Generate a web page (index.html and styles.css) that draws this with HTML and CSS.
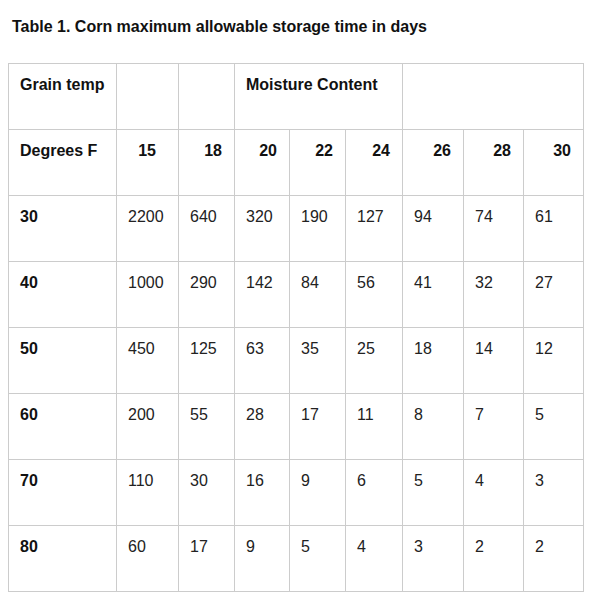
FILE: index.html
```html
<!DOCTYPE html>
<html>
<head>
<meta charset="utf-8">
<link rel="stylesheet" href="styles.css">
</head>
<body>
<h1 class="title">Table 1. Corn maximum allowable storage time in days</h1>
<table class="storage">
  <colgroup>
    <col class="c-temp">
    <col class="c-62">
    <col class="c-56">
    <col class="c-55">
    <col class="c-56">
    <col class="c-57">
    <col class="c-61">
    <col class="c-60">
    <col class="c-60">
  </colgroup>
  <tr class="head">
    <td>Grain temp</td>
    <td></td>
    <td></td>
    <td colspan="3">Moisture Content</td>
    <td colspan="3"></td>
  </tr>
  <tr class="head">
    <td>Degrees F</td>
    <td class="num num-wide">15</td>
    <td class="num">18</td>
    <td class="num">20</td>
    <td class="num">22</td>
    <td class="num">24</td>
    <td class="num">26</td>
    <td class="num">28</td>
    <td class="num">30</td>
  </tr>
  <tr><th>30</th><td>2200</td><td>640</td><td>320</td><td>190</td><td>127</td><td>94</td><td>74</td><td>61</td></tr>
  <tr><th>40</th><td>1000</td><td>290</td><td>142</td><td>84</td><td>56</td><td>41</td><td>32</td><td>27</td></tr>
  <tr><th>50</th><td>450</td><td>125</td><td>63</td><td>35</td><td>25</td><td>18</td><td>14</td><td>12</td></tr>
  <tr><th>60</th><td>200</td><td>55</td><td>28</td><td>17</td><td>11</td><td>8</td><td>7</td><td>5</td></tr>
  <tr><th>70</th><td>110</td><td>30</td><td>16</td><td>9</td><td>6</td><td>5</td><td>4</td><td>3</td></tr>
  <tr><th>80</th><td>60</td><td>17</td><td>9</td><td>5</td><td>4</td><td>3</td><td>2</td><td>2</td></tr>
</table>
</body>
</html>
```
FILE: styles.css
```css
html, body {
  background: #ffffff;
}
body {
  margin: 8px;
  font-family: "Liberation Sans", Arial, sans-serif;
  color: #222222;
}
.title {
  font-size: 16px;
  line-height: 18px;
  font-weight: bold;
  color: #111111;
  margin: 10px 0 27px 4px;
}
.storage {
  border-collapse: collapse;
  table-layout: fixed;
  width: 575px;
  font-size: 16px;
  line-height: 18px;
}
.c-temp { width: 108px; }
.c-62 { width: 62px; }
.c-56 { width: 56px; }
.c-55 { width: 55px; }
.c-57 { width: 57px; }
.c-61 { width: 61px; }
.c-60 { width: 60px; }
.storage td,
.storage th {
  border: 1px solid #cccccc;
  height: 66px;
  box-sizing: border-box;
  padding: 12px 12px 0 11px;
  vertical-align: top;
  text-align: left;
  font-weight: normal;
  white-space: nowrap;
}
.storage th {
  font-weight: bold;
  color: #111111;
}
.storage .head td {
  font-weight: bold;
  color: #111111;
}
.storage .head td.num {
  text-align: right;
}
.storage .head td.num-wide {
  padding-right: 22px;
}
```
